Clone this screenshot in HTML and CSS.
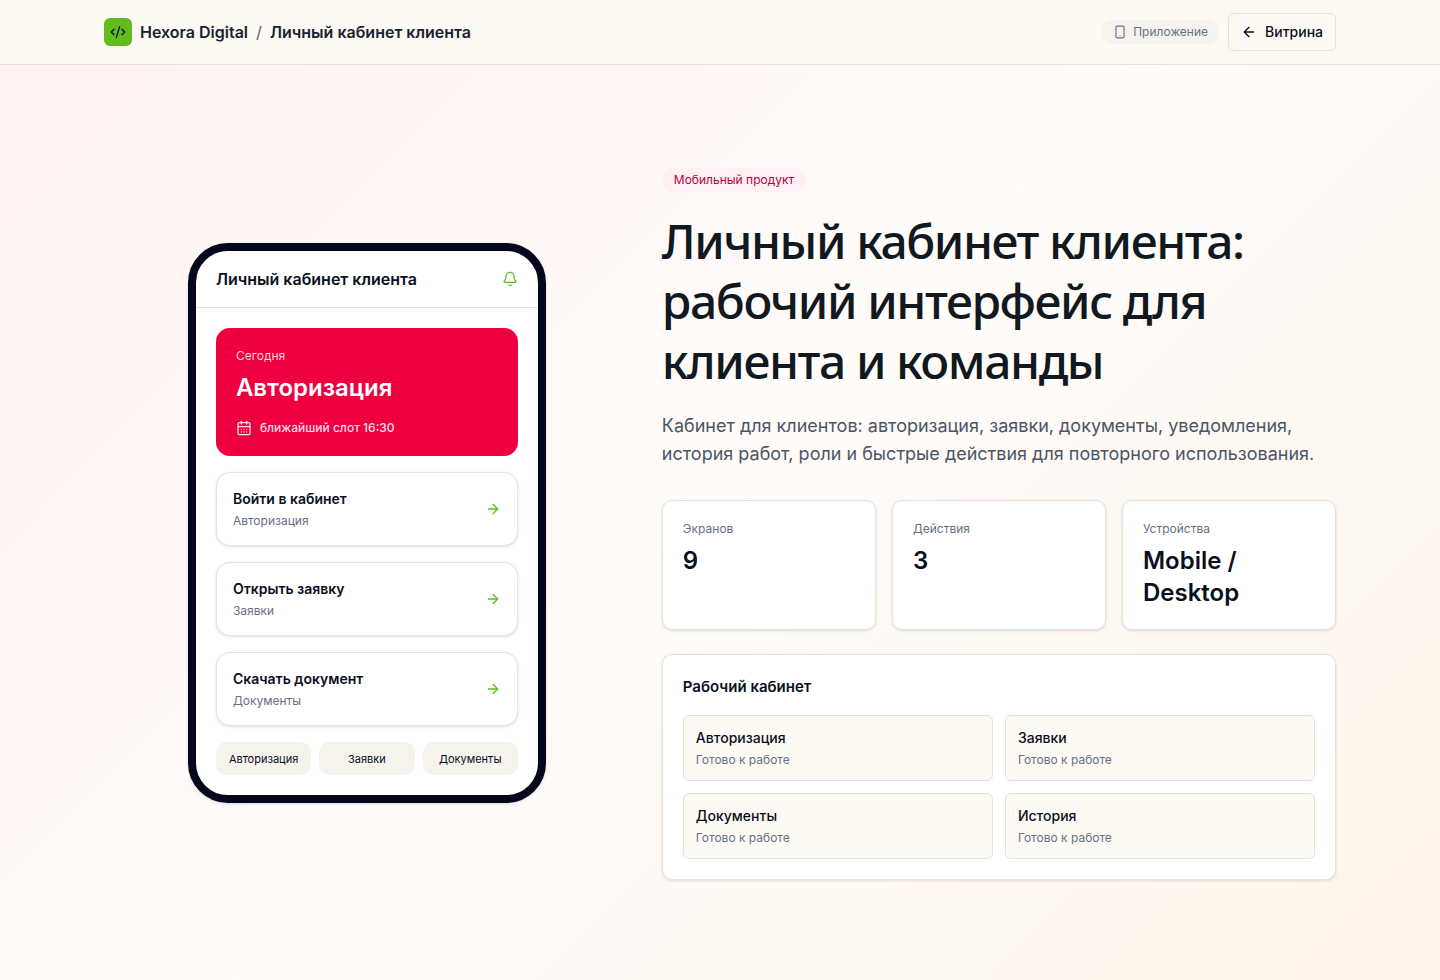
FILE: index.html
```html
<!DOCTYPE html>
<html lang="ru">
<head>
<meta charset="utf-8">
<title>Личный кабинет клиента</title>
<link rel="stylesheet" href="styles.css">
</head>
<body>
<header class="topbar">
  <div class="topbar-in">
    <div class="crumbs">
      <span class="logo"><svg width="16" height="16" viewBox="0 0 24 24" fill="none" stroke="#0a0f1e" stroke-width="2" stroke-linecap="round" stroke-linejoin="round"><path d="m18 16 4-4-4-4"/><path d="m6 8-4 4 4 4"/><path d="m14.5 4-5 16"/></svg></span>
      <span class="brand">Hexora Digital</span>
      <span class="slash">/</span>
      <span class="brand">Личный кабинет клиента</span>
    </div>
    <div class="top-actions">
      <span class="app-pill"><svg width="14" height="14" viewBox="0 0 24 24" fill="none" stroke="currentColor" stroke-width="2" stroke-linecap="round" stroke-linejoin="round"><rect x="5" y="2" width="14" height="20" rx="2"/><path d="M12 18h.01"/></svg>Приложение</span>
      <a class="back-btn"><svg width="16" height="16" viewBox="0 0 24 24" fill="none" stroke="currentColor" stroke-width="2" stroke-linecap="round" stroke-linejoin="round"><path d="m12 19-7-7 7-7"/><path d="M19 12H5"/></svg>Витрина</a>
    </div>
  </div>
</header>
<main class="main">
  <section class="phone-col">
    <div class="phone">
      <div class="phone-head">
        <span class="phone-title">Личный кабинет клиента</span>
        <svg class="accent" width="16" height="16" viewBox="0 0 24 24" fill="none" stroke="currentColor" stroke-width="2" stroke-linecap="round" stroke-linejoin="round"><path d="M10.27 21a2 2 0 0 0 3.46 0"/><path d="M3.26 15.33A1 1 0 0 0 4 17h16a1 1 0 0 0 .74-1.67C19.41 13.96 18 12.5 18 8A6 6 0 0 0 6 8c0 4.5-1.41 5.96-2.74 7.33"/></svg>
      </div>
      <div class="phone-body">
        <div class="today">
          <div class="today-label">Сегодня</div>
          <div class="today-title">Авторизация</div>
          <div class="today-slot"><svg width="16" height="16" viewBox="0 0 24 24" fill="none" stroke="currentColor" stroke-width="2" stroke-linecap="round" stroke-linejoin="round"><path d="M8 2v4"/><path d="M16 2v4"/><rect x="3" y="4" width="18" height="18" rx="2"/><path d="M3 10h18"/><path d="M8 14h.01"/><path d="M12 14h.01"/><path d="M16 14h.01"/><path d="M8 18h.01"/><path d="M12 18h.01"/><path d="M16 18h.01"/></svg>ближайший слот 16:30</div>
        </div>
        <div class="action">
          <div><div class="action-title">Войти в кабинет</div><div class="action-sub">Авторизация</div></div>
          <svg class="accent" width="16" height="16" viewBox="0 0 24 24" fill="none" stroke="currentColor" stroke-width="2" stroke-linecap="round" stroke-linejoin="round"><path d="M5 12h14"/><path d="m12 5 7 7-7 7"/></svg>
        </div>
        <div class="action">
          <div><div class="action-title">Открыть заявку</div><div class="action-sub">Заявки</div></div>
          <svg class="accent" width="16" height="16" viewBox="0 0 24 24" fill="none" stroke="currentColor" stroke-width="2" stroke-linecap="round" stroke-linejoin="round"><path d="M5 12h14"/><path d="m12 5 7 7-7 7"/></svg>
        </div>
        <div class="action">
          <div><div class="action-title">Скачать документ</div><div class="action-sub">Документы</div></div>
          <svg class="accent" width="16" height="16" viewBox="0 0 24 24" fill="none" stroke="currentColor" stroke-width="2" stroke-linecap="round" stroke-linejoin="round"><path d="M5 12h14"/><path d="m12 5 7 7-7 7"/></svg>
        </div>
        <div class="tabs">
          <span class="tab">Авторизация</span>
          <span class="tab">Заявки</span>
          <span class="tab">Документы</span>
        </div>
      </div>
    </div>
  </section>
  <section class="info">
    <span class="tag">Мобильный продукт</span>
    <h1 class="headline">Личный кабинет клиента: рабочий интерфейс для клиента и команды</h1>
    <p class="lead">Кабинет для клиентов: авторизация, заявки, документы, уведомления, история работ, роли и быстрые действия для повторного использования.</p>
    <div class="stats">
      <div class="stat"><div class="stat-label">Экранов</div><div class="stat-value">9</div></div>
      <div class="stat"><div class="stat-label">Действия</div><div class="stat-value">3</div></div>
      <div class="stat"><div class="stat-label">Устройства</div><div class="stat-value">Mobile / Desktop</div></div>
    </div>
    <div class="work">
      <h2 class="work-title">Рабочий кабинет</h2>
      <div class="work-grid">
        <div class="work-item"><div class="work-name">Авторизация</div><div class="work-state">Готово к работе</div></div>
        <div class="work-item"><div class="work-name">Заявки</div><div class="work-state">Готово к работе</div></div>
        <div class="work-item"><div class="work-name">Документы</div><div class="work-state">Готово к работе</div></div>
        <div class="work-item"><div class="work-name">История</div><div class="work-state">Готово к работе</div></div>
      </div>
    </div>
  </section>
</main>
</body>
</html>
```
FILE: styles.css
```css
* { box-sizing: border-box; }
html, body { margin: 0; padding: 0; }
body {
  min-height: 980px;
  font-family: Inter, "Noto Sans", sans-serif;
  color: #0a0f1e;
  background: linear-gradient(135deg, #fff1f2 0%, #fffcfa 50%, #fff4ea 100%);
}
.topbar {
  height: 65px;
  background: #fdfaf3;
  border-bottom: 1px solid #e5e2d8;
}
.topbar-in {
  width: 1232px;
  height: 64px;
  margin: 0 auto;
  display: flex;
  align-items: center;
  justify-content: space-between;
}
.crumbs { display: flex; align-items: center; }
.logo {
  width: 28px;
  height: 28px;
  border-radius: 6px;
  background: #63bc1d;
  display: flex;
  align-items: center;
  justify-content: center;
  margin-right: 8px;
}
.brand { font-size: 16px; font-weight: 600; line-height: 24px; color: #1a2130; }
.slash { font-size: 16px; font-weight: 500; color: #667085; margin: 0 8px; }
.top-actions { display: flex; align-items: center; gap: 8px; }
.app-pill {
  height: 24px;
  padding: 0 12px;
  border-radius: 12px;
  background: #f5f3ec;
  color: #6b7280;
  font-size: 12px;
  line-height: 16px;
  font-weight: 400;
  display: flex;
  align-items: center;
  gap: 6px;
}
.back-btn {
  height: 38px;
  padding: 0 12px;
  border: 1px solid #e5e2d8;
  border-radius: 6px;
  background: #fdfaf3;
  font-size: 14px;
  line-height: 20px;
  font-weight: 500;
  display: flex;
  align-items: center;
  gap: 8px;
  color: #0a0f1e;
}
.main {
  width: 1232px;
  margin: 0 auto;
  padding: 103px 0 100px;
  display: grid;
  grid-template-columns: 0.78fr 1fr;
  column-gap: 32px;
  align-items: start;
}
.phone-col { display: flex; justify-content: center; padding-top: 75px; }
.phone {
  width: 358px;
  height: 560px;
  border: 8px solid #04061c;
  border-radius: 40px;
  background: #fff;
  overflow: hidden;
  box-shadow: 0 1px 3px rgba(10, 15, 30, .15);
}
.phone-head {
  height: 57px;
  padding: 0 20px;
  border-bottom: 1px solid #e5e2d8;
  display: flex;
  align-items: center;
  justify-content: space-between;
}
.phone-title { font-size: 16px; font-weight: 600; }
.accent { color: #63bc1d; flex: none; }
.phone-body { padding: 20px; display: flex; flex-direction: column; gap: 16px; }
.today {
  height: 128px;
  border-radius: 14px;
  background: #ee0040;
  color: #fff;
  padding: 20px;
}
.today-label { font-size: 12px; line-height: 16px; color: #ffd5df; }
.today-title { font-size: 24px; font-weight: 600; line-height: 32px; margin-top: 8px; }
.today-slot {
  display: flex;
  align-items: center;
  gap: 8px;
  margin-top: 16px;
  font-size: 12px;
  line-height: 16px;
  font-weight: 450;
  color: #ffdfe7;
}
.action {
  height: 74px;
  border: 1px solid #e5e2d8;
  border-radius: 14px;
  background: #fff;
  box-shadow: 0 1px 3px rgba(10, 15, 30, .12);
  padding: 0 16px;
  display: flex;
  align-items: center;
  justify-content: space-between;
}
.action-title { font-size: 14px; font-weight: 600; line-height: 20px; }
.action-sub { font-size: 12px; line-height: 16px; color: #667085; margin-top: 4px; }
.tabs { display: grid; grid-template-columns: repeat(3, 1fr); gap: 8px; }
.tab {
  height: 33px;
  border-radius: 10px;
  background: #f5f3ec;
  font-size: 11px;
  line-height: 16px;
  font-weight: 400;
  display: flex;
  align-items: center;
  justify-content: center;
}
.info { display: flex; flex-direction: column; align-items: flex-start; }
.tag {
  height: 24px;
  padding: 0 12px;
  border-radius: 12px;
  background: #fff0f3;
  color: #b8003a;
  font-size: 12px;
  line-height: 16px;
  font-weight: 400;
  display: flex;
  align-items: center;
}
.headline {
  margin: 19px 0 0;
  font-family: "Noto Sans", Inter, sans-serif;
  font-size: 48px;
  line-height: 60px;
  font-weight: 500;
  letter-spacing: -0.03em;
  color: #101820;
}
.lead {
  margin: 21px 0 0;
  font-size: 18px;
  line-height: 28px;
  color: #4b5565;
}
.stats {
  width: 100%;
  margin-top: 32px;
  display: grid;
  grid-template-columns: repeat(3, 1fr);
  gap: 16px;
}
.stat {
  height: 130px;
  padding: 20px;
  background: #fff;
  border: 1px solid #e5e2d8;
  border-radius: 10px;
  box-shadow: 0 1px 3px rgba(10, 15, 30, .12);
}
.stat-label { font-size: 12px; line-height: 16px; color: #667085; }
.stat-value { font-size: 24px; line-height: 32px; font-weight: 600; margin-top: 8px; }
.work {
  width: 100%;
  margin-top: 24px;
  padding: 20px;
  background: #fff;
  border: 1px solid #e5e2d8;
  border-radius: 10px;
  box-shadow: 0 1px 3px rgba(10, 15, 30, .12);
}
.work-title { margin: 0; font-size: 15px; line-height: 24px; font-weight: 600; }
.work-grid {
  margin-top: 16px;
  display: grid;
  grid-template-columns: 1fr 1fr;
  gap: 12px;
}
.work-item {
  height: 66px;
  padding: 12px;
  background: #fdfaf3;
  border: 1px solid #e5e2d8;
  border-radius: 6px;
}
.work-name { font-size: 14px; line-height: 20px; font-weight: 500; }
.work-state { font-size: 12px; line-height: 16px; color: #667085; margin-top: 4px; }
```
